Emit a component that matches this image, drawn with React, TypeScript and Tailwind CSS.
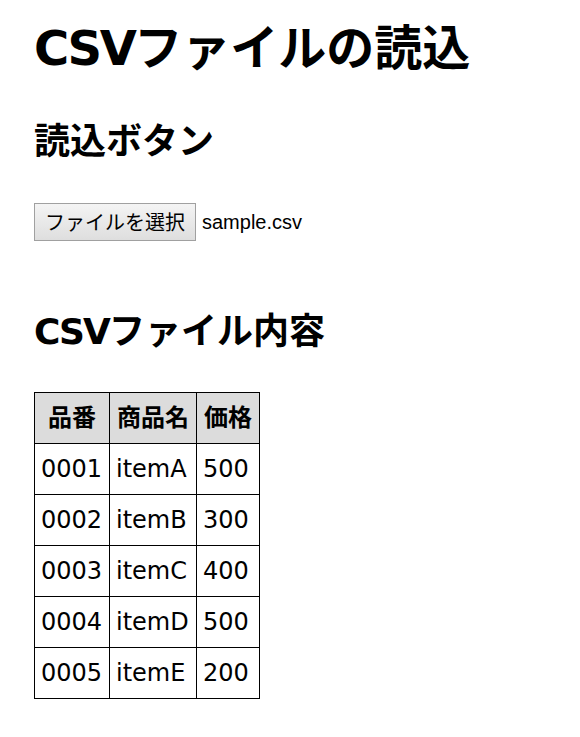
const rows = [
  { code: "0001", name: "itemA", price: "500" },
  { code: "0002", name: "itemB", price: "300" },
  { code: "0003", name: "itemC", price: "400" },
  { code: "0004", name: "itemD", price: "500" },
  { code: "0005", name: "itemE", price: "200" },
];

const jp = "font-['DejaVu_Sans','Noto_Sans_CJK_JP',sans-serif]";

export default function App() {
  return (
    <div className={`min-h-screen bg-white pl-[34px] text-black ${jp}`}>
      <h1 className="pt-[16px] text-[48px] font-bold leading-[64px]">
        <span className="tracking-[-2.5px]">CSV</span>ファイルの読込
      </h1>

      <h2 className="mt-[38px] text-[36px] font-bold leading-[48px]">読込ボタン</h2>

      {/* file input look-alike */}
      <div className="mt-[37px] flex items-center gap-[6px]">
        <button className="h-[38px] border border-[#a0a0a0] bg-linear-to-b from-[#f4f4f4] to-[#dedede] px-[10px] font-['Noto_Sans_CJK_JP',sans-serif] text-[20px] leading-none text-black">
          ファイルを選択
        </button>
        <span className="font-['Liberation_Sans',sans-serif] text-[20px]">sample.csv</span>
      </div>

      <h2 className="mt-[67px] text-[36px] font-bold leading-[48px]">
        <span className="tracking-[-2px]">CSV</span>ファイル内容
      </h2>

      <table className="mt-[36px] border-collapse text-[24px]">
        <thead>
          <tr className="h-[51px] bg-[#dcdcdc]">
            <th className="w-[75px] border border-black px-[6px] font-bold">品番</th>
            <th className="w-[87px] border border-black px-[6px] font-bold">商品名</th>
            <th className="w-[63px] border border-black px-[6px] font-bold">価格</th>
          </tr>
        </thead>
        <tbody>
          {rows.map((r) => (
            <tr key={r.code} className="h-[51px]">
              <td className="border border-black px-[6px]">{r.code}</td>
              <td className="border border-black px-[6px]">{r.name}</td>
              <td className="border border-black px-[6px]">{r.price}</td>
            </tr>
          ))}
        </tbody>
      </table>
    </div>
  );
}
